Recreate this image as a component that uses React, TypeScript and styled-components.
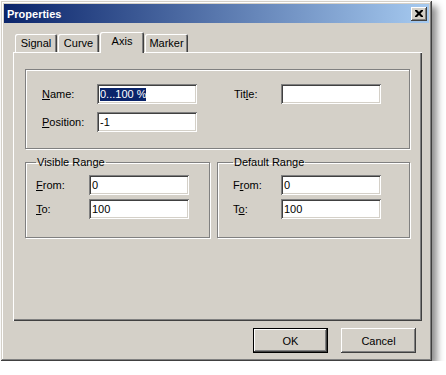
import styled, { createGlobalStyle } from "styled-components";

const GlobalStyle = createGlobalStyle`
  body {
    margin: 0;
    background: #ffffff;
    font-family: "Liberation Sans", Arial, sans-serif;
    font-size: 11px;
    color: #000000;
  }
`;

const face = "#d4d0c8";

const raised = `
  box-shadow: inset -1px -1px #404040, inset 1px 1px #ffffff,
    inset -2px -2px #808080, inset 2px 2px ${face};
`;

const tabs = [
  { label: "Signal", width: 42 },
  { label: "Curve", width: 41 },
  { label: "Axis", width: 44, active: true },
  { label: "Marker", width: 43 },
];

export default function App() {
  return (
    <>
      <GlobalStyle />
      <Window>
        <TitleBar>
          <TitleText>Properties</TitleText>
          <CloseButton>
            <svg width="8" height="7" viewBox="0 0 8 7">
              <path d="M0 0h2l2 2 2-2h2v1l-2.5 2.5L8 6v1H6L4 5 2 7H0V6l2.5-2.5L0 1z" fill="#000" />
            </svg>
          </CloseButton>
        </TitleBar>
        <Content>
          <TabStrip>
            {tabs.map((t) => (
              <Tab key={t.label} $width={t.width} $active={t.active}>
                {t.label}
              </Tab>
            ))}
          </TabStrip>
          <Panel>
            <PlainGroup>
              <Label>
                <u>N</u>ame:
              </Label>
              <Field>
                <Selection>0...100 %</Selection>
              </Field>
              <span />
              <Label>
                Tit<u>l</u>e:
              </Label>
              <Field />
              <Label>
                <u>P</u>osition:
              </Label>
              <Field>-1</Field>
            </PlainGroup>
            <GroupRow>
              <Group $labelWidth={53} $padLeft={10}>
                <Legend>Visible Range</Legend>
                <Label>
                  <u>F</u>rom:
                </Label>
                <Field>0</Field>
                <Label>
                  <u>T</u>o:
                </Label>
                <Field>100</Field>
              </Group>
              <Group $labelWidth={48} $padLeft={15}>
                <Legend>Default Range</Legend>
                <Label>
                  F<u>r</u>om:
                </Label>
                <Field>0</Field>
                <Label>
                  T<u>o</u>:
                </Label>
                <Field>100</Field>
              </Group>
            </GroupRow>
          </Panel>
          <ButtonRow>
            <Button $default>OK</Button>
            <Button>Cancel</Button>
          </ButtonRow>
        </Content>
      </Window>
    </>
  );
}

const Window = styled.div`
  margin: 1px 0 0 1px;
  width: 431px;
  height: 360px;
  box-sizing: border-box;
  padding: 3px;
  background: ${face};
  display: flex;
  flex-direction: column;
  box-shadow: inset -1px -1px #404040, inset 1px 1px ${face},
    inset -2px -2px #808080, inset 2px 2px #ffffff,
    5px 5px 7px rgba(0, 0, 0, 0.45);
`;

const TitleBar = styled.div`
  height: 19px;
  flex-shrink: 0;
  background: linear-gradient(to right, #0a246a, #a6caf0);
  display: flex;
  align-items: center;
  justify-content: space-between;
  padding: 0 2px 0 3px;
`;

const TitleText = styled.span`
  color: #ffffff;
  font-weight: bold;
  font-size: 11px;
`;

const CloseButton = styled.div`
  width: 16px;
  height: 14px;
  background: ${face};
  display: flex;
  align-items: center;
  justify-content: center;
  ${raised}
`;

const Content = styled.div`
  flex: 1;
  display: flex;
  flex-direction: column;
  padding: 9px 7px 5px 9px;
`;

const TabStrip = styled.div`
  height: 20px;
  display: flex;
  align-items: flex-end;
  padding-left: 2px;
  position: relative;
  z-index: 1;
`;

const Tab = styled.div<{ $active?: boolean; $width: number }>`
  width: ${(p) => p.$width}px;
  height: ${(p) => (p.$active ? 21 : 18)}px;
  margin-bottom: ${(p) => (p.$active ? -1 : 0)}px;
  margin-left: ${(p) => (p.$active ? 0 : 0)}px;
  padding-bottom: ${(p) => (p.$active ? 4 : 1)}px;
  box-sizing: border-box;
  display: flex;
  align-items: center;
  justify-content: center;
  background: ${face};
  border-radius: 2px 2px 0 0;
  position: relative;
  z-index: ${(p) => (p.$active ? 2 : 1)};
  box-shadow: inset 1px 1px #ffffff, inset -1px 0 #404040, inset -2px 0 #808080;

  & + & {
    margin-left: ${(p) => (p.$active ? 0 : 1)}px;
  }
  &:nth-child(2) {
    margin-left: 0;
  }
`;

const Panel = styled.div`
  flex: 1;
  display: flex;
  flex-direction: column;
  gap: 7px;
  padding: 17px 12px;
  box-shadow: inset 1px 1px #ffffff, inset -1px -1px #404040,
    inset -2px -2px #808080;
`;

const etched = `
  border: 1px solid #808080;
  box-shadow: inset 1px 1px #ffffff, 1px 1px #ffffff;
`;

const PlainGroup = styled.div`
  ${etched}
  height: 80px;
  box-sizing: border-box;
  padding: 14px 0 0 16px;
  display: grid;
  grid-template-columns: 55px 100px 37px 47px 100px;
  grid-auto-rows: 20px;
  row-gap: 8px;
  align-items: center;
`;

const GroupRow = styled.div`
  display: grid;
  grid-template-columns: 185px 1fr;
  gap: 7px;
`;

const Group = styled.fieldset<{ $labelWidth: number; $padLeft: number }>`
  ${etched}
  margin: 0;
  min-width: 0;
  height: 82px;
  box-sizing: border-box;
  padding: 6px 0 0 ${(p) => p.$padLeft}px;
  display: grid;
  grid-template-columns: ${(p) => p.$labelWidth}px 100px;
  grid-auto-rows: 20px;
  row-gap: 4px;
  align-content: start;
  align-items: center;
`;

const Legend = styled.legend`
  padding: 0 1px;
  line-height: 13px;
`;

const Label = styled.span`
  white-space: nowrap;
`;

const Field = styled.div`
  height: 20px;
  box-sizing: border-box;
  background: #ffffff;
  padding: 0 3px;
  display: flex;
  align-items: center;
  box-shadow: inset 1px 1px #808080, inset -1px -1px #ffffff,
    inset 2px 2px #404040, inset -2px -2px ${face};
`;

const Selection = styled.span`
  background: #0a246a;
  color: #ffffff;
  line-height: 13px;
`;

const ButtonRow = styled.div`
  display: flex;
  justify-content: flex-end;
  gap: 13px;
  margin-top: 7px;
  padding-right: 6px;
`;

const Button = styled.div<{ $default?: boolean }>`
  width: 75px;
  height: 25px;
  box-sizing: border-box;
  display: flex;
  align-items: center;
  justify-content: center;
  background: ${face};
  border: ${(p) => (p.$default ? "1px solid #000000" : "none")};
  ${raised}
`;
